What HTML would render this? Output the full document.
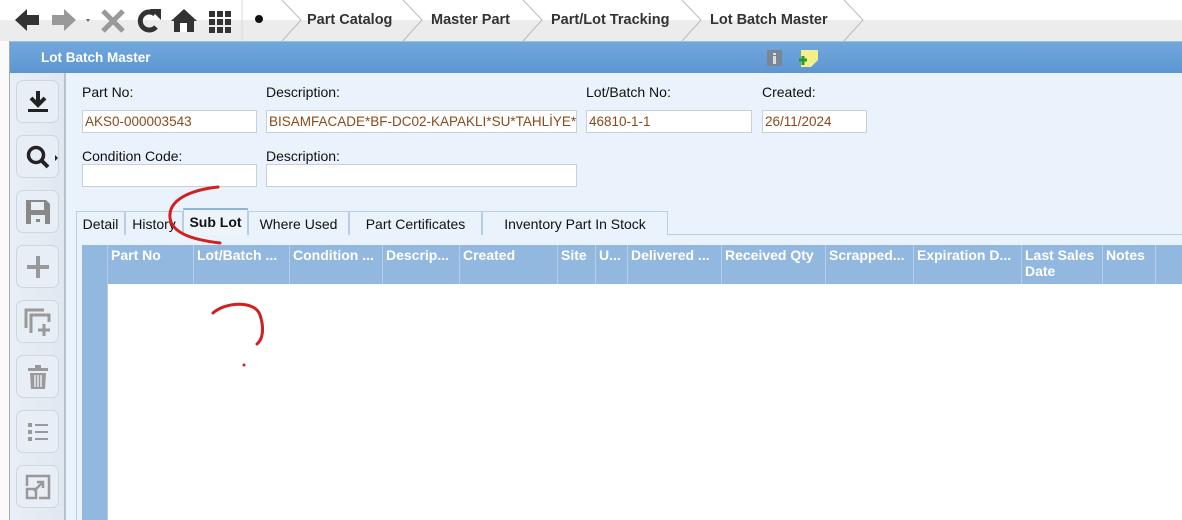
<!DOCTYPE html>
<html><head><meta charset="utf-8"><style>
*{margin:0;padding:0;box-sizing:border-box}
body{width:1182px;height:520px;overflow:hidden;background:#fff;font-family:"Liberation Sans",sans-serif;position:relative}
.abs{position:absolute}
.top{left:0;top:0;width:1182px;height:41px;background:linear-gradient(#fff 0,#fff 20px,#ececec 20px,#ececec 41px)}
.bc{top:12px;font-size:14.5px;font-weight:bold;color:#333}
.hdr{left:10px;top:41px;width:1172px;height:32px;background:linear-gradient(#72a7dc,#5c96d2);border-top:1px solid #9bc0e6}
.hdr span{position:absolute;left:31px;top:8px;color:#fff;font-weight:bold;font-size:13.5px}
.lstrip{left:0;top:41px;width:10px;height:479px;background:#fafafa;border-right:1px solid #aaa}
.ltb{left:10px;top:73px;width:56px;height:447px;background:linear-gradient(90deg,#e9eff6,#dfe7f0);border-right:2px solid #b8c2cc}
.btn{position:absolute;left:6px;width:43px;height:43px;border:1px solid #cfd6de;border-radius:7px;background:#e8eef5}
.btn svg{position:absolute;left:7px;top:7px}
.content{left:66px;top:73px;width:1116px;height:447px;background:#eaf2fb}
.lbl{font-size:14px;color:#111}
.inp{height:23px;background:#fff;border:1px solid #c9cfd6;font-size:13.5px;color:#8a4a1c;padding:3px 2px;white-space:nowrap;overflow:hidden}
.tab{top:211px;height:24px;border:1px solid #b9cde3;border-bottom:none;background:#eaf2fb;font-size:14px;color:#111;padding-top:4px;text-align:center}
.grid{left:82px;top:245px;width:1100px;height:275px;background:#fff}
.gh{left:82px;top:245px;width:1100px;height:39px;background:#93b8e0}
.gl{left:82px;top:245px;width:26px;height:275px;background:#93b8e0;border-right:1px solid #b0cbe8}
.col{top:247px;font-weight:bold;font-size:14px;color:#fff;line-height:16px}
.sep{top:245px;width:1px;height:39px;background:#b5cfea}
</style></head><body>
<div class="abs top"></div>
<svg class="abs" style="left:0;top:0" width="300" height="41">
<path d="M15 20 L27 9 L27 15 L39 15 L39 25 L27 25 L27 31 Z" fill="#333"/>
<path d="M76 20 L64 9 L64 15 L52 15 L52 25 L64 25 L64 31 Z" fill="#999"/>
<path d="M86 19 L90 19 L88 22Z" fill="#666"/>
<path d="M103 11 L123 31 M123 11 L103 31" stroke="#999" stroke-width="5"/>
<path d="M155 14 A9 9 0 1 0 156 27" stroke="#333" stroke-width="5" fill="none"/>
<path d="M150 9 L161 9 L161 20 Z" fill="#333"/>
<path d="M171 21 L184 9 L197 21 L194 21 L194 32 L174 32 L174 21 Z" fill="#333"/>
<rect x="180" y="23" width="7" height="9" fill="#fff"/>
<g fill="#333"><rect x="209" y="11" width="6" height="6"/><rect x="217" y="11" width="6" height="6"/><rect x="225" y="11" width="6" height="6"/><rect x="209" y="19" width="6" height="6"/><rect x="217" y="19" width="6" height="6"/><rect x="225" y="19" width="6" height="6"/><rect x="209" y="27" width="6" height="6"/><rect x="217" y="27" width="6" height="6"/><rect x="225" y="27" width="6" height="6"/></g>
<circle cx="259" cy="19" r="4" fill="#111"/>
<line x1="242" y1="0" x2="242" y2="41" stroke="#ddd"/>
</svg>
<svg class="abs" style="left:0;top:0" width="1182" height="41">
<g stroke="#bbb" fill="none"><path d="M282 0 L301 20 L282 41"/><path d="M403 0 L422 20 L403 41"/><path d="M523 0 L542 20 L523 41"/><path d="M682 0 L701 20 L682 41"/><path d="M844 0 L863 20 L844 41"/></g>
</svg>
<div class="abs bc" style="left:307px">Part Catalog</div>
<div class="abs bc" style="left:431px">Master Part</div>
<div class="abs bc" style="left:551px">Part/Lot Tracking</div>
<div class="abs bc" style="left:710px">Lot Batch Master</div>
<div class="abs lstrip"></div>
<div class="abs hdr"><span>Lot Batch Master</span>
<svg style="position:absolute;left:756px;top:6px" width="60" height="22"><rect x="1" y="2" width="15" height="16" fill="#7a8694"/><rect x="7" y="5" width="3" height="2" fill="#ddd"/><rect x="7" y="8" width="3" height="8" fill="#ddd"/><path d="M35 2 L52 2 L52 12 L45 19 L35 19 Z" fill="#f3f08a"/><path d="M33 12 L41 12 M37 8 L37 17" stroke="#2a9a2a" stroke-width="3"/></svg>
</div>
<div class="abs ltb">
<div class="btn" style="top:7px"><svg width="28" height="28"><path d="M14 3 L14 16 M7 10 L14 17 L21 10" stroke="#222" stroke-width="4" fill="none"/><rect x="4" y="21" width="20" height="3" fill="#222"/></svg></div>
<div class="btn" style="top:62px"><svg width="34" height="28"><circle cx="12" cy="12" r="7.5" stroke="#222" stroke-width="3.5" fill="none"/><path d="M17 17 L24 24" stroke="#222" stroke-width="4"/><path d="M31 12 L34 15 L31 18Z" fill="#222"/></svg></div>
<div class="btn" style="top:117px"><svg width="28" height="28"><path d="M2 2 L22 2 L26 6 L26 26 L2 26Z" fill="#888"/><rect x="7" y="4" width="13" height="8" fill="#e8eef5"/><rect x="7" y="17" width="14" height="9" fill="#e8eef5"/><rect x="12" y="21" width="4" height="3" fill="#888"/></svg></div>
<div class="btn" style="top:172px"><svg width="28" height="28"><path d="M14 3 L14 25 M3 14 L25 14" stroke="#999" stroke-width="4"/></svg></div>
<div class="btn" style="top:227px"><svg width="28" height="28"><g stroke="#999" stroke-width="3" fill="none"><path d="M2 20 L2 2 L20 2"/><path d="M7 25 L7 7 L25 7 L25 14"/></g><path d="M20 16 L20 28 M14 22 L26 22" stroke="#999" stroke-width="3"/></svg></div>
<div class="btn" style="top:282px"><svg width="28" height="28"><rect x="4" y="5" width="20" height="3" fill="#999"/><rect x="11" y="2" width="6" height="3" fill="#999"/><path d="M6 10 L22 10 L21 26 L7 26Z" fill="#999"/><path d="M11 12 L11 24 M14 12 L14 24 M17 12 L17 24" stroke="#e8eef5" stroke-width="1.5"/></svg></div>
<div class="btn" style="top:337px"><svg width="28" height="28"><g fill="#999"><rect x="4" y="5" width="4" height="4"/><rect x="4" y="12" width="4" height="4"/><rect x="4" y="19" width="4" height="4"/><rect x="11" y="6" width="13" height="2"/><rect x="11" y="13" width="13" height="2"/><rect x="11" y="20" width="13" height="2"/></g></svg></div>
<div class="btn" style="top:392px"><svg width="28" height="28"><path d="M3 13 L3 3 L25 3 L25 25 L15 25" stroke="#999" stroke-width="2.5" fill="none"/><rect x="3" y="16" width="9" height="9" stroke="#999" stroke-width="2.5" fill="none"/><path d="M10 18 L19 9 M13 9 L19 9 L19 15" stroke="#999" stroke-width="2.5" fill="none"/></svg></div>
</div>
<div class="abs content"></div>
<div class="abs lbl" style="left:82px;top:84px">Part No:</div>
<div class="abs lbl" style="left:266px;top:84px">Description:</div>
<div class="abs lbl" style="left:586px;top:84px">Lot/Batch No:</div>
<div class="abs lbl" style="left:762px;top:84px">Created:</div>
<div class="abs inp" style="left:82px;top:110px;width:175px">AKS0-000003543</div>
<div class="abs inp" style="left:266px;top:110px;width:311px">BISAMFACADE*BF-DC02-KAPAKLI*SU*TAHLİYE*TAHLİYE</div>
<div class="abs inp" style="left:586px;top:110px;width:166px">46810-1-1</div>
<div class="abs inp" style="left:762px;top:110px;width:105px">26/11/2024</div>
<div class="abs lbl" style="left:82px;top:148px">Condition Code:</div>
<div class="abs lbl" style="left:266px;top:148px">Description:</div>
<div class="abs inp" style="left:82px;top:164px;width:175px"></div>
<div class="abs inp" style="left:266px;top:164px;width:311px"></div>
<div class="abs" style="left:76px;top:234px;width:1106px;height:286px;border-left:1px solid #b9cde3;border-top:1px solid #b9cde3"></div>
<div class="abs tab" style="left:76px;width:49px">Detail</div>
<div class="abs tab" style="left:125px;width:58px">History</div>
<div class="abs tab" style="left:183px;width:65px;top:208px;height:27px;font-weight:bold;background:#eef4fb;border-top:2px solid #8db3de">Sub Lot</div>
<div class="abs tab" style="left:248px;width:101px">Where Used</div>
<div class="abs tab" style="left:349px;width:133px">Part Certificates</div>
<div class="abs tab" style="left:482px;width:186px">Inventory Part In Stock</div>
<div class="abs grid"></div>
<div class="abs gh"></div>
<div class="abs gl"></div>
<div class="abs col" style="left:111px">Part No</div>
<div class="abs sep" style="left:193px"></div><div class="abs col" style="left:197px">Lot/Batch ...</div>
<div class="abs sep" style="left:289px"></div><div class="abs col" style="left:293px">Condition ...</div>
<div class="abs sep" style="left:382px"></div><div class="abs col" style="left:386px">Descrip...</div>
<div class="abs sep" style="left:459px"></div><div class="abs col" style="left:463px">Created</div>
<div class="abs sep" style="left:557px"></div><div class="abs col" style="left:561px">Site</div>
<div class="abs sep" style="left:595px"></div><div class="abs col" style="left:599px">U...</div>
<div class="abs sep" style="left:627px"></div><div class="abs col" style="left:631px">Delivered ...</div>
<div class="abs sep" style="left:721px"></div><div class="abs col" style="left:725px">Received Qty</div>
<div class="abs sep" style="left:825px"></div><div class="abs col" style="left:829px">Scrapped...</div>
<div class="abs sep" style="left:913px"></div><div class="abs col" style="left:917px">Expiration D...</div>
<div class="abs sep" style="left:1021px"></div><div class="abs col" style="left:1025px">Last Sales<br>Date</div>
<div class="abs sep" style="left:1102px"></div><div class="abs col" style="left:1106px">Notes</div>
<div class="abs sep" style="left:1155px"></div>
<svg class="abs" style="left:0;top:0" width="1182" height="520">
<path d="M218 187 C190 190 168 200 170 218 C172 234 195 240 220 243" stroke="#d21f1f" stroke-width="3" fill="none" stroke-linecap="round"/>
<path d="M213 313 C225 302 255 300 260 315 C265 330 262 340 257 344" stroke="#d21f1f" stroke-width="3" fill="none" stroke-linecap="round"/>
<circle cx="244" cy="365" r="1.5" fill="#d21f1f"/>
</svg>
</body></html>
